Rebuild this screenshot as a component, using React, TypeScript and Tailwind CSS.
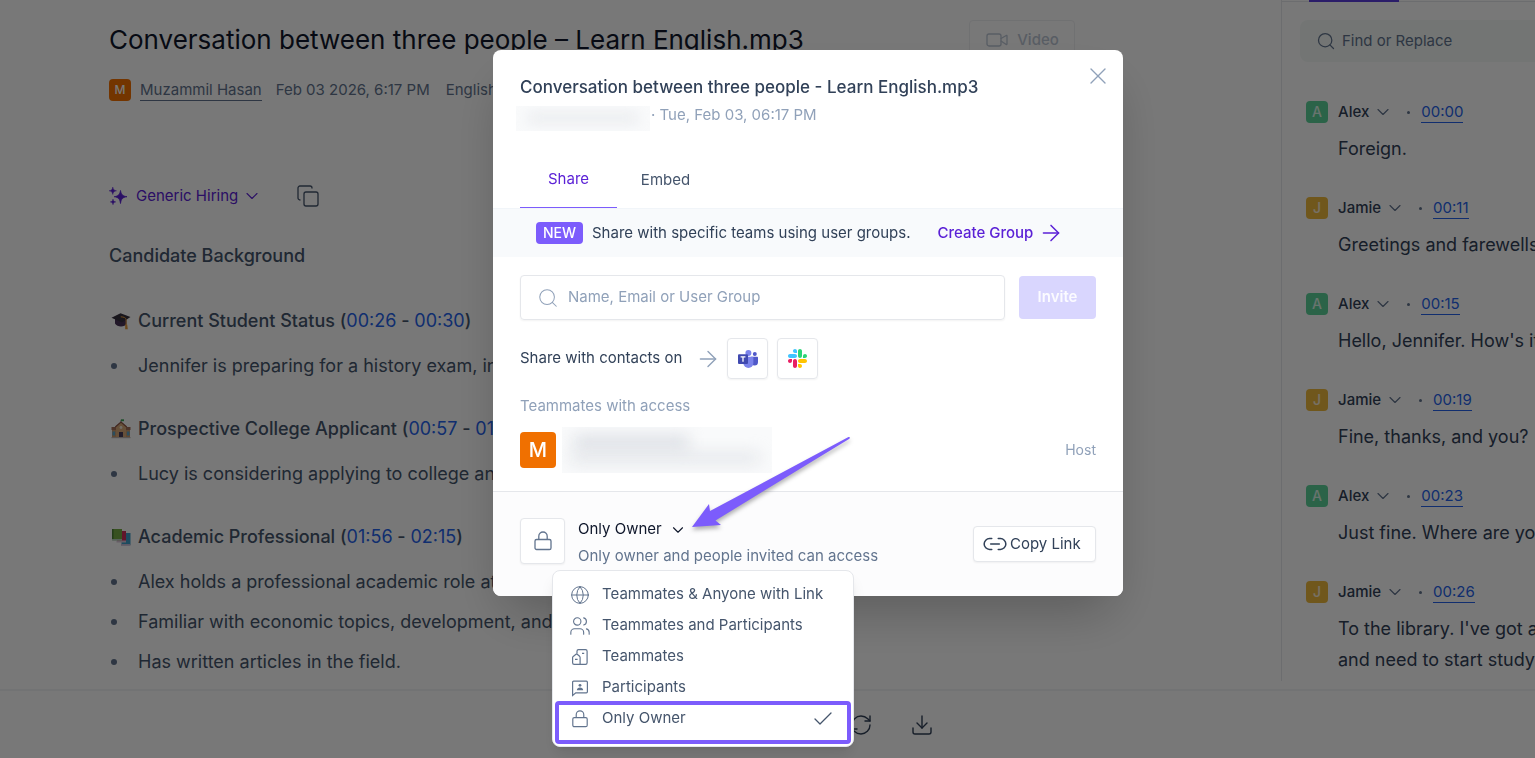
import { useState } from 'react';
import {
  ArrowRight,
  Check,
  ChevronDown,
  Copy,
  Download,
  Globe,
  Link2,
  RefreshCw,
  Search,
  Users,
  Video,
  X,
} from 'lucide-react';

const transcript = [
  { speaker: 'Alex', time: '00:00', lines: ['Foreign.'] },
  { speaker: 'Jamie', time: '00:11', lines: ['Greetings and farewells'] },
  { speaker: 'Alex', time: '00:15', lines: ["Hello, Jennifer. How's it"] },
  { speaker: 'Jamie', time: '00:19', lines: ['Fine, thanks, and you?'] },
  { speaker: 'Alex', time: '00:23', lines: ['Just fine. Where are you'] },
  {
    speaker: 'Jamie',
    time: '00:26',
    lines: ["To the library. I've got a", 'and need to start studying'],
  },
];

const sections = [
  {
    icon: 'cap',
    title: 'Current Student Status',
    from: '00:26',
    to: '00:30',
    points: ['Jennifer is preparing for a history exam, including'],
  },
  {
    icon: 'school',
    title: 'Prospective College Applicant',
    from: '00:57',
    to: '01:07',
    points: ['Lucy is considering applying to college and'],
  },
  {
    icon: 'books',
    title: 'Academic Professional',
    from: '01:56',
    to: '02:15',
    points: [
      'Alex holds a professional academic role at',
      'Familiar with economic topics, development, and trade.',
      'Has written articles in the field.',
    ],
  },
];

const accessOptions = [
  { id: 'link', label: 'Teammates & Anyone with Link' },
  { id: 'both', label: 'Teammates and Participants' },
  { id: 'team', label: 'Teammates' },
  { id: 'participants', label: 'Participants' },
  { id: 'owner', label: 'Only Owner' },
];

const LockIcon = ({ className }: { className?: string }) => (
  <svg className={className} viewBox="0 0 18 20" fill="none" stroke="currentColor" strokeWidth="1.3" aria-hidden="true">
    <rect x="1" y="8.5" width="16" height="10" rx="1.6" />
    <path d="M4.8 8.5V5.2a4.2 4.2 0 0 1 8.4 0v3.3" />
  </svg>
);

const SparkleIcon = () => (
  <svg className="w-[18px] h-[18px]" viewBox="0 0 18 18" fill="currentColor" aria-hidden="true">
    <path d="M11.500 3.500c.6 4 2 5.600 6.500 6.200c-4.500.6-5.900 2.300-6.500 6.800c-.6-4.500-2-6.200-6.300-6.800c4.300-.6 5.700-2.200 6.300-6.200z" stroke="currentColor" strokeWidth=".8" strokeLinejoin="round" />
    <path d="M3.800 0c.4 2.500 1.300 3.400 3.700 3.800c-2.400.4-3.300 1.300-3.700 3.700c-.4-2.400-1.300-3.300-3.800-3.700c2.500-.4 3.400-1.300 3.800-3.800z" stroke="currentColor" strokeWidth=".4" />
    <path d="M4 12c.3 1.900 1 2.600 2.800 2.900c-1.800.3-2.500 1-2.800 2.900c-.3-1.900-1-2.600-2.800-2.900c1.800-.3 2.500-1 2.800-2.900z" stroke="currentColor" strokeWidth=".4" />
  </svg>
);

const TeammatesIcon = ({ className }: { className?: string }) => (
  <svg className={className} viewBox="0 0 18 18" fill="none" stroke="currentColor" strokeWidth="1.2" aria-hidden="true">
    <path d="M6 5.500V3.200C6 2.300 6.600 1.600 7.500 1.600h7c.9 0 1.600.7 1.600 1.600v11.600c0 .9-.7 1.600-1.600 1.600H3.200c-.9 0-1.600-.7-1.600-1.600V9.600c0-.5.2-.9.600-1.200L5 6.300c.4-.3.900-.2 1.200 0l2.400 2c.3.300.500.600.500 1.100v7" />
    <path d="M11 5.300h2.200M4 11.300h2.600" />
  </svg>
);

const ParticipantsIcon = ({ className }: { className?: string }) => (
  <svg className={className} viewBox="0 0 18 18" fill="none" stroke="currentColor" strokeWidth="1.2" aria-hidden="true">
    <path d="M1.600 16.500V3.200c0-.6.4-1 1-1h12.800c.6 0 1 .4 1 1v9.600c0 .6-.4 1-1 1H4.800z" />
    <circle cx="9" cy="6.300" r="1.400" fill="currentColor" stroke="none" />
    <path d="M5.800 11.200c.2-1.800 1.400-2.700 3.200-2.700s3 .9 3.200 2.700z" fill="currentColor" stroke="none" />
  </svg>
);

const TeamsLogo = () => (
  <svg className="w-5 h-[18px]" viewBox="0 0 20 18" aria-hidden="true">
    <circle cx="16.800" cy="3.900" r="2" fill="#5059c9" />
    <path d="M13 6.800h6c.6 0 1 .4 1 1v4.200a3.500 3.500 0 0 1-7 0z" fill="#5059c9" />
    <circle cx="10.400" cy="3" r="3" fill="#7b83eb" />
    <path d="M5.500 6.800h9c.5 0 .9.4.9.900v5.300a5 5 0 0 1-10 0z" fill="#7b83eb" />
    <rect x="0" y="4.200" width="10" height="9.800" rx="1" fill="#4049b0" />
    <path d="M2.600 6.900h4.800M5 6.900v4.800" stroke="#fff" strokeWidth="1.300" />
  </svg>
);

const SlackLogo = () => (
  <svg className="w-[19px] h-[19px]" viewBox="0 0 122.8 122.8" aria-hidden="true">
    <path d="M25.8 77.6c0 7.1-5.8 12.9-12.9 12.9S0 84.7 0 77.6s5.8-12.9 12.9-12.9h12.9v12.9zm6.5 0c0-7.1 5.8-12.9 12.9-12.9s12.9 5.8 12.9 12.9v32.3c0 7.1-5.8 12.9-12.9 12.9s-12.9-5.8-12.9-12.9V77.6z" fill="#e91e63" />
    <path d="M45.2 25.8c-7.1 0-12.9-5.8-12.9-12.9S38.1 0 45.2 0s12.9 5.8 12.9 12.9v12.9H45.2zm0 6.500c7.1 0 12.9 5.8 12.9 12.9s-5.8 12.9-12.9 12.9H12.9C5.8 58.1 0 52.3 0 45.2s5.8-12.9 12.9-12.9h32.3z" fill="#40c4ff" />
    <path d="M97 45.2c0-7.1 5.8-12.9 12.9-12.9s12.9 5.8 12.9 12.9-5.8 12.9-12.9 12.9H97V45.2zm-6.500 0c0 7.1-5.8 12.9-12.9 12.9s-12.9-5.8-12.9-12.9V12.9C64.7 5.8 70.5 0 77.6 0s12.9 5.8 12.9 12.9v32.3z" fill="#2bd576" />
    <path d="M77.6 97c7.1 0 12.9 5.8 12.9 12.9s-5.8 12.9-12.9 12.9-12.9-5.8-12.9-12.9V97h12.9zm0-6.500c-7.1 0-12.9-5.8-12.9-12.9s5.8-12.9 12.9-12.9h32.3c7.1 0 12.9 5.8 12.9 12.9s-5.8 12.9-12.9 12.9H77.6z" fill="#ffc400" />
  </svg>
);

const SectionIcon = ({ name }: { name: string }) => {
  if (name === 'cap') {
    return (
      <svg className="w-5 h-5" viewBox="0 0 20 20" aria-hidden="true">
        <path d="M4 8v4.500c1 1.800 3.500 3 6 3s4.800-1 5.500-2.200V8z" fill="#4a3358" />
        <path d="M.5 6.800 9.500 2.300l10 3.700-8.500 5.500z" fill="#37313f" />
        <path d="M9.800 5.800c3 .2 5 .8 5.300 2.800v6" stroke="#e59a3c" strokeWidth="1" fill="none" />
        <path d="M14.200 13.500h2l.6 4.800h-2.600z" fill="#e59a3c" />
      </svg>
    );
  }
  if (name === 'school') {
    return (
      <svg className="w-5 h-5" viewBox="0 0 20 20" aria-hidden="true">
        <path d="M1 10h18v8.500H1z" fill="#c99a6c" />
        <path d="M.5 8h19v3H.5z" fill="#a5705a" />
        <path d="M5 19V7l5-4 5 4v12z" fill="#d9ab7a" />
        <path d="m4.300 8 5.700-5 5.700 5" fill="none" stroke="#8d5548" strokeWidth="1.300" />
        <path d="M10 3V.8" stroke="#666" strokeWidth=".7" />
        <path d="M10 .3h3v1.900h-3z" fill="#3ea65b" />
        <circle cx="10" cy="8.500" r="1.400" fill="#f3e8dc" />
        <path d="M8 13h4v6H8z" fill="#493f5d" />
        <path d="M1.500 12.500h2.600v4H1.500zM15.900 12.500h2.600v4h-2.600z" fill="#5fa3c8" />
        <path d="M.5 18h19v1.200H.5z" fill="#bdb4b0" />
      </svg>
    );
  }
  return (
    <svg className="w-5 h-5" viewBox="0 0 20 20" aria-hidden="true">
      <path d="M10.500 6H19.500v12h-9z" fill="#3f9fc9" />
      <path d="M10 17h9.500v1.800H10z" fill="#c4bed9" />
      <path d="M6 4h9v10.500H6z" fill="#cf2f5c" />
      <path d="M5.500 13.500H15v2H5.500z" fill="#d8c6d6" />
      <path d="M1 2h10v10H1z" fill="#75ad45" />
      <path d="M1 12h10v1.800H2c-.6 0-1-.4-1-.900z" fill="#b9d1bf" />
      <path d="M1 2h1.600v10H1z" fill="#4b8137" />
    </svg>
  );
};

const OptionIcon = ({ id }: { id: string }) => {
  if (id === 'link') return <Globe className="w-5 h-5 shrink-0" strokeWidth={1.2} />;
  if (id === 'both') return <Users className="w-[22px] h-[22px] shrink-0" strokeWidth={1.2} />;
  if (id === 'team') return <TeammatesIcon className="w-[18px] h-[18px]" />;
  if (id === 'participants') return <ParticipantsIcon className="w-[18px] h-[18px]" />;
  return <LockIcon className="w-[18px] h-[18px]" />;
};

const NotesPanel = () => (
  <main className="flex-1 min-w-0 overflow-hidden pl-[109px] pt-5 text-slate-600">
    <div className="flex items-center justify-between pr-[206px]">
      <h1 className="text-[26px] leading-10 text-slate-900 whitespace-nowrap">
        Conversation between three people – Learn English.mp3
      </h1>
      <button className="flex items-center gap-2 h-10 w-[106px] justify-center border border-gray-200 rounded text-[15px] font-medium text-slate-400 opacity-60">
        <Video className="w-6 h-6" strokeWidth={1.3} />
        Video
      </button>
    </div>

    <div className="flex items-center mt-[18px] h-6 text-[15px] text-slate-500 whitespace-nowrap">
      <span className="flex items-center justify-center w-[22px] h-[22px] rounded bg-[#f57200] text-xs font-medium text-white">M</span>
      <a href="#owner" className="ml-[9px] leading-5 border-b border-slate-500">Muzammil Hasan</a>
      <span className="ml-[14px]">Feb 03 2026, 6:17 PM</span>
      <span className="ml-4">English</span>
    </div>

    <div className="flex items-center mt-[82px] h-6">
      <button className="flex items-center text-[#5b21d6]">
        <SparkleIcon />
        <span className="ml-[9px] text-[15px]">Generic Hiring</span>
        <ChevronDown className="ml-1 w-5 h-5" strokeWidth={1.3} />
      </button>
      <button aria-label="Copy notes" className="ml-[34px]">
        <Copy className="w-6 h-6" strokeWidth={1.3} />
      </button>
    </div>

    <h2 className="mt-9 text-lg leading-6 font-medium">Candidate Background</h2>

    <div className="flex flex-col gap-[39px] mt-[41px]">
      {sections.map((section) => (
        <section key={section.title}>
          <h3 className="flex items-center text-lg leading-6 font-medium whitespace-nowrap">
            <span className="w-[29px] pl-[2px]">
              <SectionIcon name={section.icon} />
            </span>
            <span>
              {section.title} (
              <a href="#from" className="font-normal text-[#2563eb]">{section.from}</a>
              {' - '}
              <a href="#to" className="font-normal text-[#2563eb]">{section.to}</a>)
            </span>
          </h3>
          <ul className="flex flex-col gap-4 mt-[21px]">
            {section.points.map((point) => (
              <li key={point} className="flex items-center text-lg leading-6 whitespace-nowrap">
                <span className="w-[29px] pl-[2px]">
                  <span className="block w-[6px] h-[6px] rounded-full bg-slate-500" />
                </span>
                {point}
              </li>
            ))}
          </ul>
        </section>
      ))}
    </div>
  </main>
);

const TranscriptPanel = () => (
  <aside className="w-[254px] shrink-0 overflow-hidden border-l border-gray-200 text-slate-700">
    <div className="h-[2px] border-b border-gray-200 pl-[27px]">
      <div className="w-[90px] h-[2px] bg-[#5b3fe0]" />
    </div>
    <label className="flex items-center gap-[6px] mt-[18px] ml-[18px] h-[42px] pl-4 rounded-l-lg bg-[#f4f9f7]">
      <Search className="w-5 h-5 text-slate-500 shrink-0" strokeWidth={1.5} />
      <input
        type="text"
        aria-label="Find or Replace"
        placeholder="Find or Replace"
        className="w-full min-w-0 bg-transparent text-[15px] outline-none placeholder:text-slate-500"
      />
    </label>
    <div className="flex flex-col gap-8 mt-[38px] pl-6">
      {transcript.map((item) => (
        <div key={item.time}>
          <div className="flex items-center h-6">
            <span
              className={`flex items-center justify-center w-[22px] h-[22px] rounded text-sm font-medium text-white/80 ${
                item.speaker === 'Alex' ? 'bg-[#5bd399]' : 'bg-[#efb93d]'
              }`}
            >
              {item.speaker[0]}
            </span>
            <button className="flex items-center gap-1 ml-[10px] text-[15px] font-medium">
              {item.speaker}
              <ChevronDown className="w-5 h-5 text-slate-500" strokeWidth={1.4} />
            </button>
            <span className="ml-[14px] w-[3px] h-[3px] rounded-full bg-slate-500" />
            <a href="#time" className="ml-[11px] text-[15px] leading-5 border-b border-[#2563eb] text-[#2563eb]">
              {item.time}
            </a>
          </div>
          <div className="mt-[9px] pl-8 text-lg leading-[31px] whitespace-nowrap">
            {item.lines.map((line) => (
              <p key={line}>{line}</p>
            ))}
          </div>
        </div>
      ))}
    </div>
  </aside>
);

const AccessMenu = ({ value, onChange }: { value: string; onChange: (id: string) => void }) => (
  <div role="menu" className="absolute top-full -left-[26px] w-[302px] h-[177px] pt-2 rounded-lg border border-gray-200 bg-white shadow-lg">
    {accessOptions.map((option) => (
      <button
        key={option.id}
        role="menuitem"
        onClick={() => onChange(option.id)}
        className="flex items-center w-full h-[31px] pl-[18px] pr-[18px] text-[15px] text-slate-600 whitespace-nowrap"
      >
        <span className="flex justify-center shrink-0 w-[18px] mr-[13px] text-slate-500">
          <OptionIcon id={option.id} />
        </span>
        {option.label}
        {value === option.id && <Check className="ml-auto w-6 h-6" strokeWidth={1.3} />}
      </button>
    ))}
    {/* Highlight around the owner option */}
    <div className="absolute left-[2px] right-[2px] bottom-[2px] h-[43px] rounded border-4 border-[#7c5cfc] pointer-events-none" />
  </div>
);

const ShareModal = () => {
  const [access, setAccess] = useState('owner');

  return (
    <div role="dialog" aria-label="Share" className="relative w-[630px] rounded-lg bg-white shadow-2xl text-slate-700">
      <button aria-label="Close" className="absolute top-3 right-[11px] text-slate-400">
        <X className="w-7 h-7" strokeWidth={1.2} />
      </button>

      <div className="px-[27px] pt-[25px]">
        <h2 className="text-[17px] leading-6 font-medium">Conversation between three people - Learn English.mp3</h2>
        <div className="flex items-center h-8">
          <span className="self-end -ml-1 w-[134px] h-[25px] bg-gray-50 overflow-hidden">
            <span className="block mt-2 mx-3 h-2 bg-gray-300/50 blur-[7px]" />
          </span>
          <span className="ml-[1px] text-[15px] text-slate-400">· Tue, Feb 03, 06:17 PM</span>
        </div>
      </div>

      <div role="tablist" className="flex mt-[21px] px-[27px] border-b border-slate-100 text-[15px]">
        <button role="tab" aria-selected="true" className="w-[97px] h-[56px] border-b border-[#7c5cfc] text-[#5b21d6]">
          Share
        </button>
        <button role="tab" aria-selected="false" className="w-[97px] h-[56px] text-slate-600">
          Embed
        </button>
      </div>

      <div className="flex items-center h-12 px-[43px] bg-slate-50 text-[15px]">
        <span className="flex items-center justify-center shrink-0 w-[47px] h-[22px] rounded bg-[#7c5cfc] text-sm font-medium text-white">NEW</span>
        <span className="ml-[9px] whitespace-nowrap">Share with specific teams using user groups.</span>
        <button className="flex items-center ml-[27px] font-medium text-[#5b21d6] whitespace-nowrap">
          Create Group
          <ArrowRight className="ml-[5px] w-[26px] h-[26px]" strokeWidth={1.4} />
        </button>
      </div>

      <div className="px-[27px] pt-[18px]">
        <div className="flex items-center gap-[14px]">
          <label className="flex flex-1 items-center h-[45px] pl-4 rounded border border-gray-200 shadow-xs">
            <Search className="w-[22px] h-[22px] text-slate-400 shrink-0" strokeWidth={1.1} />
            <input
              type="text"
              aria-label="Name, Email or User Group"
              placeholder="Name, Email or User Group"
              className="flex-1 min-w-0 ml-[9px] text-[15px] outline-none placeholder:text-slate-400"
            />
          </label>
          <button disabled className="w-[77px] h-[43px] rounded bg-[#d9d6fe] text-[15px] font-semibold text-white/90">
            Invite
          </button>
        </div>

        <div className="flex items-center mt-[18px] text-[15px]">
          <span>Share with contacts on</span>
          <ArrowRight className="ml-[13px] w-[26px] h-[26px] text-slate-400" strokeWidth={1.3} />
          <button aria-label="Microsoft Teams" className="flex items-center justify-center ml-[6px] w-[41px] h-[41px] rounded border border-gray-200 shadow-xs">
            <TeamsLogo />
          </button>
          <button aria-label="Slack" className="flex items-center justify-center ml-[9px] w-[41px] h-[41px] rounded border border-gray-200 shadow-xs">
            <SlackLogo />
          </button>
        </div>

        <p className="mt-[15px] text-[15px] leading-6 text-slate-400">Teammates with access</p>

        <div className="flex items-center mt-[9px] h-[46px] mb-[18px]">
          <span className="flex items-center justify-center w-9 h-9 rounded bg-[#f07000] text-xl font-medium text-white">M</span>
          <span className="flex flex-col justify-center gap-1 ml-[6px] w-[210px] h-[46px] bg-gray-50 overflow-hidden">
            <span className="ml-3 w-[115px] h-3 bg-gray-300/80 blur-[8px]" />
            <span className="ml-2 w-[190px] h-3 bg-gray-300/50 blur-[8px]" />
          </span>
          <span className="ml-auto text-sm text-slate-400">Host</span>
        </div>
      </div>

      <div className="flex items-center justify-between px-[27px] py-[26px] border-t border-gray-200 rounded-b-lg bg-[#fcfcfd]">
        <div className="flex">
          <span className="flex items-center justify-center w-[45px] h-[46px] rounded border border-gray-200 bg-white shadow-xs text-slate-500">
            <LockIcon className="w-[18px] h-5" />
          </span>
          <div className="relative ml-[13px]">
            <button className="flex items-center h-[23px] text-[15px] text-slate-900">
              Only Owner
              <ChevronDown className="ml-[7px] w-[18px] h-[18px]" strokeWidth={1.5} />
            </button>
            <p className="h-[29px] leading-[29px] text-[15px] text-slate-500 whitespace-nowrap">
              Only owner and people invited can access
            </p>
            <AccessMenu value={access} onChange={setAccess} />
          </div>
        </div>
        <button className="flex items-center gap-[2px] w-[123px] h-9 pl-2 rounded border border-gray-200 bg-white shadow-xs text-[15px] text-slate-700">
          <Link2 className="w-[26px] h-[26px]" strokeWidth={1.4} />
          Copy Link
        </button>
      </div>

      {/* Callout arrow */}
      <svg
        className="absolute left-[197px] top-[384px] w-[162px] h-[96px] drop-shadow-[0_3px_2px_rgba(0,0,0,0.3)] pointer-events-none"
        viewBox="0 0 162 96"
        fill="#7c5cfc"
        aria-hidden="true"
      >
        <path d="M2 93 19 70l1 7L158 3.300c2-1 2.500.6 1 1.600L25.500 86.500 31 91z" />
      </svg>
    </div>
  );
};

const App = () => (
  <div className="relative flex flex-col h-screen overflow-hidden bg-white font-['Inter',sans-serif]">
    <div className="flex flex-1 min-h-0 pb-2">
      <NotesPanel />
      <TranscriptPanel />
    </div>
    <footer className="flex items-center gap-[37px] h-[69px] shrink-0 pl-[849px] border-t-2 border-gray-100 bg-white text-slate-700">
      <button aria-label="Regenerate">
        <RefreshCw className="w-6 h-6" strokeWidth={1.4} />
      </button>
      <button aria-label="Download">
        <Download className="w-6 h-6" strokeWidth={1.4} />
      </button>
    </footer>

    <div className="fixed inset-0 flex items-start justify-center pl-[81px] pt-[50px] bg-black/53">
      <ShareModal />
    </div>
  </div>
);

export default App;
